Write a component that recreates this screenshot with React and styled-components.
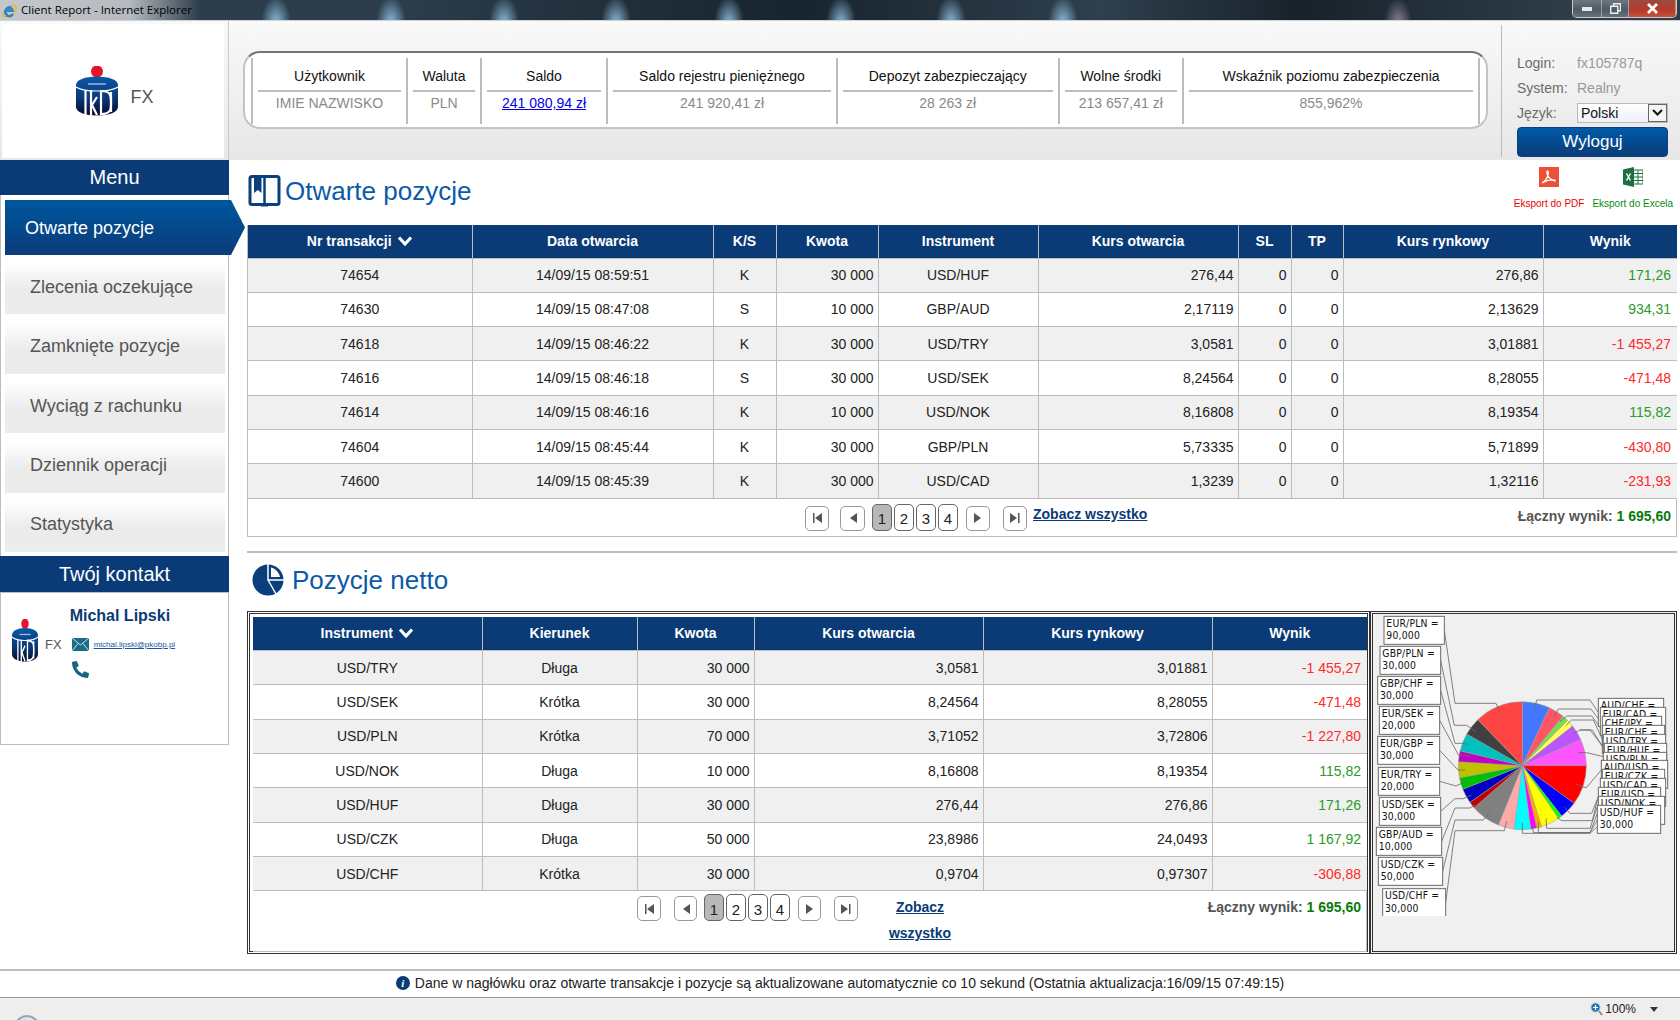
import React from "react";
import styled, { createGlobalStyle } from "styled-components";
import { FaPhoneAlt } from "react-icons/fa";

const NAVY = "#0a3b76";
const LINE = "#bdbdbd";

const GlobalStyle = createGlobalStyle`
  html, body {
    margin: 0;
    padding: 0;
    background: #fff;
  }
  body {
    width: 1680px;
    height: 1020px;
    overflow: hidden;
    font-family: "Liberation Sans", Arial, sans-serif;
    font-size: 14px;
    color: #222;
  }
  * {
    box-sizing: border-box;
  }
`;

/* ---------- window chrome ---------- */

const blobs = [276, 391, 504, 616, 729, 841, 951, 1063]
  .map((x) => `radial-gradient(15px 28px at ${x}px 24px, rgba(150,205,240,.9), rgba(150,205,240,0))`)
  .join(",");

const TitleBar = styled.div`
  height: 21px;
  display: flex;
  align-items: flex-start;
  border-bottom: 1px solid #cfd3d6;
  background:
    linear-gradient(90deg, rgba(205,208,212,.95) 0, rgba(205,208,212,.85) 130px, rgba(205,208,212,0) 200px),
    radial-gradient(14px 26px at 1398px 24px, rgba(190,170,200,.7), rgba(190,170,200,0)),
    ${blobs},
    linear-gradient(90deg, #2c3c4a 0, #2c3c4a 400px, #18242e 800px, #2f3f4d 1100px, #18222b 1300px, #2f3d49 1570px);
`;

const TitleIcon = styled.svg`
  width: 17px;
  height: 18px;
  margin: 2px 3px 0 1px;
  flex-shrink: 0;
`;

const TitleText = styled.span`
  font-family: "Open Sans", sans-serif;
  font-size: 11.5px;
  line-height: 20px;
  color: #000;
  white-space: nowrap;
`;

const WindowButtons = styled.div`
  margin-left: auto;
  margin-right: 3px;
  display: flex;
  height: 18px;
  border: 1px solid #c8ccd2;
  border-top: 0;
  border-radius: 0 0 5px 5px;
  overflow: hidden;
`;

const WindowButton = styled.div`
  width: ${(p) => p.$w}px;
  display: flex;
  align-items: center;
  justify-content: center;
  color: #fff;
  border-right: 1px solid rgba(255, 255, 255, 0.4);
  background: ${(p) =>
    p.$close
      ? "linear-gradient(#9a4a40, #b83a28 60%, #c2553f)"
      : "linear-gradient(#6d7780, #4e5a64 55%, #66717a)"};
`;

const Header = styled.header`
  height: 139px;
  display: flex;
  background: linear-gradient(#f9f9f9, #e7e7e7);
`;

const LogoCell = styled.div`
  width: 229px;
  padding: 3px 4px 2px 2px;
  border-right: 1px solid #c9c9c9;
  flex-shrink: 0;
`;

const LogoPanel = styled.div`
  height: 100%;
  padding-left: 4px;
  background: #fff;
  display: flex;
  align-items: center;
  justify-content: center;
  gap: 12px;
`;

const LogoFx = styled.span`
  margin-top: ${(p) => p.$mt}px;
  font-size: ${(p) => p.$size}px;
  color: #555;
`;

const InfoBox = styled.div`
  width: 1245px;
  height: 78px;
  margin: 30px 0 0 14px;
  padding: 5px 6px;
  display: flex;
  background: #fff;
  border: 2px solid #c4c4c4;
  border-top-color: #747474;
  border-radius: 17px;
  flex-shrink: 0;
`;

const InfoCell = styled.div`
  width: ${(p) => p.$w}px;
  height: 66px;
  padding: 0 5px;
  border-left: 2px solid ${LINE};
  border-right: ${(p) => (p.$last ? `2px solid ${LINE}` : "0")};
  text-align: center;
  flex-shrink: 0;
`;

const InfoTitle = styled.div`
  height: 34px;
  padding-top: 9px;
  line-height: 18px;
  color: #111;
  border-bottom: 2px solid ${LINE};
  white-space: nowrap;
`;

const InfoValue = styled.div`
  padding-top: 2px;
  line-height: 18px;
  color: #8a8a8a;
`;

const BlueLink = styled.a`
  color: #0000ee;
  text-decoration: underline;
`;

const LoginPanel = styled.div`
  width: 167px;
  margin: 4px 0 3px 13px;
  padding: 25px 0 0 15px;
  border-left: 1px solid #bbb;
  flex-shrink: 0;
`;

const LoginRow = styled.div`
  height: 25px;
  display: flex;
  align-items: center;
`;

const LoginLabel = styled.span`
  width: 60px;
  color: #6b6b6b;
`;

const LoginValue = styled.span`
  color: #999;
`;

const SelectBox = styled.div`
  width: 91px;
  height: 20px;
  display: flex;
  align-items: center;
  justify-content: space-between;
  padding-left: 3px;
  color: #111;
  border: 1px solid #bbb;
  background: linear-gradient(#fff, #eef0fa);
`;

const SelectArrow = styled.span`
  width: 19px;
  height: 18px;
  display: flex;
  align-items: center;
  justify-content: center;
  border: 1px solid #666;
  background: #f4f4f4;
`;

const LogoutButton = styled.button`
  width: 151px;
  height: 30px;
  margin-top: 2px;
  padding: 0;
  display: block;
  color: #fff;
  font: 17px "Liberation Sans", Arial, sans-serif;
  border: 1px solid #0a3f80;
  border-radius: 4px;
  background: linear-gradient(#005aa8, #0a3c78);
`;

/* ---------- sidebar ---------- */

const Main = styled.div`
  height: 809px;
  display: flex;
`;

const Sidebar = styled.aside`
  width: 229px;
  flex-shrink: 0;
`;

const SideHeader = styled.div`
  height: ${(p) => p.$h}px;
  display: flex;
  align-items: center;
  justify-content: center;
  color: #fff;
  font-size: 20px;
  background: ${NAVY};
`;

const MenuList = styled.nav`
  height: 361px;
  padding: 5px 0 0 4px;
  display: flex;
  flex-direction: column;
  gap: 5.4px;
  border-left: 1px solid ${LINE};
  border-right: 1px solid ${LINE};
`;

const MenuItem = styled.div`
  width: 220px;
  height: 54px;
  padding-left: 25px;
  display: flex;
  align-items: center;
  flex-shrink: 0;
  font-size: 18px;
  color: #555;
  background: linear-gradient(#fff 5%, #ebebeb 55%, #ececec);
`;

const ActiveItem = styled(MenuItem)`
  position: relative;
  z-index: 2;
  width: 240px;
  height: 55px;
  padding: 2px 0 0 20px;
  color: #fff;
  background: linear-gradient(#00569f, #0a3c78);
  clip-path: polygon(0 0, 226px 0, 240px 50%, 226px 100%, 0 100%);
`;

const ContactBox = styled.div`
  height: 153px;
  padding: 14px 0 0 11px;
  display: flex;
  gap: 8px;
  border: 1px solid ${LINE};
`;

const ContactLogo = styled.div`
  margin-top: 12px;
  display: flex;
  align-items: center;
  gap: 7px;
  height: 43px;
`;

const ContactName = styled.div`
  font-size: 16px;
  font-weight: bold;
  line-height: 18px;
  color: ${NAVY};
`;

const ContactRow = styled.div`
  margin: ${(p) => p.$mt}px 0 0 2px;
  display: flex;
  align-items: center;
  gap: 5px;
  color: #156682;
`;

const Mail = styled.a`
  font-size: 8px;
  color: #1a56a0;
  text-decoration: underline;
`;

/* ---------- content ---------- */

const Content = styled.main`
  width: 1430px;
  margin-left: 18px;
`;

const TitleRow = styled.div`
  height: ${(p) => p.$h}px;
  padding: ${(p) => p.$top}px 0 0 ${(p) => p.$left}px;
  display: flex;
  align-items: flex-start;
  gap: ${(p) => p.$gap}px;
`;

const PageTitle = styled.h1`
  margin: 1px 0 0;
  font-size: 26px;
  font-weight: normal;
  line-height: 30px;
  color: #0b5aa8;
`;

const Exports = styled.div`
  margin-left: auto;
  margin-top: -8px;
  padding-right: 4px;
  display: flex;
  gap: 8px;
`;

const ExportLink = styled.a`
  display: flex;
  flex-direction: column;
  align-items: center;
  gap: 11px;
  font-size: 10px;
  line-height: 12px;
  white-space: nowrap;
  color: ${(p) => p.$color};
`;

const Panel = styled.section`
  border: 1px solid ${LINE};
  border-top: 0;
`;

const Table = styled.table`
  width: 100%;
  table-layout: fixed;
  border-collapse: collapse;
`;

const Th = styled.th`
  height: ${(p) => p.$h}px;
  padding: 0;
  color: #fff;
  font-size: 14px;
  font-weight: bold;
  background: ${NAVY};
  border-left: 1px solid ${LINE};
  border-bottom: 1px solid ${LINE};
  &:first-child {
    border-left: 0;
  }
`;

const Row = styled.tr`
  background: ${(p) => (p.$odd ? "#f0f0f0" : "#fff")};
`;

const Td = styled.td`
  height: 34.3px;
  padding: 0 4px;
  font-size: 14px;
  color: ${(p) => p.$color || "#222"};
  text-align: ${(p) => p.$align || "center"};
  border: 1px solid ${LINE};
  &:first-child {
    border-left: 0;
  }
  &:last-child {
    padding-right: 6px;
    border-right: 0;
  }
`;

const SortMark = styled.svg`
  width: 16px;
  height: 12px;
  margin-left: 5px;
  vertical-align: -1px;
`;

const Footer = styled.div`
  height: ${(p) => p.$h}px;
  padding: ${(p) => p.$top}px 5px 0 ${(p) => p.$inset}px;
  display: flex;
  align-items: flex-start;
`;

const PagerButton = styled.span`
  width: ${(p) => p.$w}px;
  height: ${(p) => (p.$tall ? 27 : 25)}px;
  margin-top: ${(p) => (p.$tall ? 0 : 2)}px;
  margin-left: ${(p) => p.$ml}px;
  display: flex;
  align-items: center;
  justify-content: center;
  flex-shrink: 0;
  padding-top: ${(p) => (p.$tall ? 3 : 0)}px;
  color: #222;
  font-size: 15px;
  background: ${(p) => (p.$active ? "#b8b8b8" : "#fff")};
  border: 1px solid ${(p) => (p.$tall ? "#666" : "#999")};
  border-radius: 5px;
`;

const ArrowIcon = styled.svg`
  width: 12px;
  height: 12px;
  fill: #555;
`;

const AllLink = styled.a`
  display: block;
  color: ${NAVY};
  font-size: 14px;
  font-weight: bold;
  line-height: ${(p) => p.$lh}px;
  text-decoration: underline;
  text-align: center;
  white-space: nowrap;
  width: ${(p) => p.$w}px;
  margin-left: ${(p) => p.$ml}px;
  flex-shrink: 0;
`;

const Total = styled.div`
  margin-left: auto;
  font-size: 14px;
  font-weight: bold;
  line-height: ${(p) => p.$lh}px;
  color: #555;
  white-space: nowrap;
`;

const TotalValue = styled.span`
  color: #0a7a0a;
`;

const Divider = styled.hr`
  height: 2px;
  margin: 14px 0 0;
  border: 0;
  background: ${LINE};
`;

const NetRow = styled.div`
  height: 343px;
  display: flex;
`;

const DoubleBox = styled.div`
  height: 100%;
  border: 3px double #333;
`;

const NetBox = styled(DoubleBox)`
  width: 1123px;
  padding-left: 3px;
  padding-top: 3px;
`;

const NetInner = styled.div`
  height: 335px;
  border-bottom: 1px solid ${LINE};
  border-right: 1px solid ${LINE};
`;

const ChartBox = styled(DoubleBox)`
  width: 307px;
  background: #f0f0f0;
`;

const Chart = styled.svg`
  display: block;
  width: 301px;
  height: 302px;
  text {
    font-family: "DejaVu Sans", sans-serif;
    font-stretch: condensed;
    font-size: 31px;
    letter-spacing: 0.6px;
    fill: #111;
  }
`;

/* ---------- bottom ---------- */

const Note = styled.div`
  height: 29px;
  padding-bottom: 3px;
  display: flex;
  align-items: center;
  justify-content: center;
  gap: 5px;
  border-top: 2px solid ${LINE};
  border-bottom: 1px solid #999;
  color: #222;
`;

const NoteIcon = styled.span`
  width: 14px;
  height: 14px;
  border-radius: 50%;
  background: ${NAVY};
  color: #fff;
  font: italic bold 11px/14px "Liberation Serif", serif;
  text-align: center;
`;

const StatusBar = styled.div`
  height: 22px;
  display: flex;
  align-items: flex-start;
  overflow: hidden;
  background: #f0eded;
`;

const Orb = styled.div`
  width: 26px;
  height: 26px;
  margin: 17px 0 0 14px;
  border: 2px solid #8ea6bd;
  border-radius: 50%;
  background: #dfe8f0;
  flex-shrink: 0;
`;

const Zoom = styled.div`
  margin-left: auto;
  padding: 4px 22px 0 0;
  display: flex;
  align-items: center;
  gap: 2px;
  font-size: 12px;
  line-height: 14px;
  color: #222;
`;

const ZoomCaret = styled.span`
  width: 0;
  height: 0;
  margin-left: 12px;
  border-left: 4px solid transparent;
  border-right: 4px solid transparent;
  border-top: 5px solid #333;
`;

/* ---------- drawings ---------- */

const Logo = ({ w, h }) => (
  <svg width={w} height={h} viewBox="0 0 42 50" preserveAspectRatio="none">
    <defs>
      <linearGradient id="pko" x1="0" y1="0" x2="0" y2="1">
        <stop offset="0" stopColor="#0a57a5" />
        <stop offset="0.55" stopColor="#0a3a7a" />
        <stop offset="1" stopColor="#040a24" />
      </linearGradient>
    </defs>
    <circle cx="21" cy="5.5" r="6" fill="#e8132b" />
    <path d="M0 19c0-5 9-8.500 21-8.500s21 3.500 21 8.500v22c0 5-9 8.500-21 8.500S0 46 0 41z" fill="url(#pko)" />
    <path d="M12 18h18" stroke="#9fb8dc" strokeWidth="1.500" />
    <path d="M9.500 24v26M15 24v26M21 31l-5 8 5 10M25 24v25M35 26v20" stroke="#fff" strokeWidth="2.200" fill="none" />
    <path d="M25 25c8 0 10 3 10 9v5c0 6-2 9-10 9" stroke="#fff" strokeWidth="2.200" fill="none" />
    <path d="M0 21c5 3 11 4 21 4s16-1 21-4" stroke="#fff" strokeWidth="1.200" fill="none" />
  </svg>
);

const SortDown = () => (
  <SortMark viewBox="0 0 16 12">
    <path d="M2 2.500 8 9l6-6.500" fill="none" stroke="#fff" strokeWidth="3.200" />
  </SortMark>
);

const BookIcon = () => (
  <svg width="33" height="32" viewBox="0 0 33 32">
    <path d="M2 3.500Q2 1.500 4 1.500H29Q31 1.500 31 3.500V28Q31 29.500 29 29.500H4Q2 29.500 2 28Z" fill="#fff" stroke="#0a3f7c" strokeWidth="3" />
    <path d="M16.500 1v30" stroke="#0a3f7c" strokeWidth="2.500" />
    <path d="M6 1h7.500v17l-3.700-3-3.800 3z" fill="#0a3f7c" />
    <path d="M13 32h7" stroke="#0a3f7c" strokeWidth="1" />
  </svg>
);

const PieIcon = () => (
  <svg width="32" height="32" viewBox="0 0 32 32">
    <circle cx="16" cy="16" r="15.500" fill="#0a3f7c" />
    <path d="M16 0v16h16M16 16l8 14" fill="none" stroke="#fff" strokeWidth="1.500" />
    <path d="M19 3.500c4.500 1 8 5 9 9.500h-9z" fill="#fff" />
  </svg>
);

const PdfIcon = () => (
  <svg width="20" height="20" viewBox="0 0 20 20">
    <rect width="20" height="20" fill="#ee4f37" />
    <path d="M3 16c2-1 5-4 6-8 .5-2 .3-4-.5-4s-1 2 0 4c1.500 3 4 5 7 6 1 .3 1-1-.5-1-3-.2-7 .5-10 2-1 .5-2 1-2 1z" fill="none" stroke="#fff" strokeWidth="1.300" />
  </svg>
);

const ExcelIcon = () => (
  <svg width="20" height="20" viewBox="0 0 20 20">
    <path d="M0 2.500 11 0v20L0 17.500z" fill="#1d7044" />
    <path d="M11 3h9v14h-9" fill="#fff" stroke="#1d7044" />
    <path d="M11 6.500h9M11 10h9M11 13.500h9M15 3v14" stroke="#1d7044" />
    <path d="M3.500 6.500l4 7M7.500 6.500l-4 7" stroke="#fff" strokeWidth="1.400" />
  </svg>
);

const MailIcon = () => (
  <svg width="17" height="13" viewBox="0 0 17 13">
    <rect width="17" height="13" fill="#1a6a8a" />
    <path d="M0 0l8.500 7L17 0M0 13l6-7.500M17 13l-6-7.500" fill="none" stroke="#fff" strokeWidth=".8" />
  </svg>
);

const EdgeArrow = ({ d }) => (
  <ArrowIcon viewBox="0 0 12 12">
    <path d={d} />
  </ArrowIcon>
);

const Pager = ({ small }) => (
  <>
    <PagerButton $w={24}>
      <EdgeArrow d="M2 1h1.500v10H2zM11 1v10L4 6z" />
    </PagerButton>
    <PagerButton $w={small ? 23 : 25} $ml={small ? 13 : 11}>
      <EdgeArrow d="M10 1v10L3 6z" />
    </PagerButton>
    {[1, 2, 3, 4].map((n) => (
      <PagerButton key={n} $tall $w={20} $ml={n === 1 ? 7 : 2} $active={n === 1}>
        {n}
      </PagerButton>
    ))}
    <PagerButton $w={small ? 23 : 24} $ml={8}>
      <EdgeArrow d="M2 1v10l7-5z" />
    </PagerButton>
    <PagerButton $w={24} $ml={13}>
      <EdgeArrow d="M1 1v10l7-5zM9 1h1.500v10H9z" />
    </PagerButton>
  </>
);

/* ---------- pie chart, coordinates are in a 3x grid ---------- */

const slices = [
  [25, "#4477ff"], [39.5, "#ff5566"], [45, "#77dd55"], [51.8, "#ffff55"], [66, "#bb55ff"],
  [90, "#ff55ff"], [126, "#ff0000"], [142, "#0000ff"], [145.6, "#00ff00"], [162.5, "#ffff00"],
  [167, "#ffaa00"], [172.5, "#ff00ff"], [187.5, "#00ffff"], [202, "#ffaaaa"], [229, "#808080"],
  [235, "#c00000"], [248.4, "#0000c0"], [259, "#00c000"], [273.6, "#c0c000"], [283.4, "#c000c0"],
  [299.7, "#00c0c0"], [316, "#404040"], [360, "#ff4444"],
];

const CX = 487;
const CY = 497;
const R = 192;

const point = (deg) => {
  const a = (deg * Math.PI) / 180;
  return `${(CX + R * Math.sin(a)).toFixed(1)} ${(CY - R * Math.cos(a)).toFixed(1)}`;
};

const sliceEdges = slices.map((s, i) => [i ? slices[i - 1][0] : 0, s[0], s[1]]);

const leftLabels = [
  ["EUR/PLN", "90,000", 72, 49, 253],
  ["GBP/PLN", "30,000", 60, 139, 242],
  ["GBP/CHF", "30,000", 53, 229, 242],
  ["EUR/SEK", "20,000", 58, 319, 239],
  ["EUR/GBP", "30,000", 53, 409, 239],
  ["EUR/TRY", "20,000", 55, 502, 239],
  ["USD/SEK", "30,000", 58, 592, 242],
  ["GBP/AUD", "10,000", 49, 682, 245],
  ["USD/CZK", "50,000", 55, 772, 248],
  ["USD/CHF", "30,000", 68, 866, 257],
];

const rightLabels = [
  ["AUD/CHF", "30,000", 715, 295, 911],
  ["EUR/CAD", "20,000", 721, 322, 917],
  ["CHF/JPY", "10,000", 727, 349, 905],
  ["EUR/CHF", "10,000", 727, 376, 914],
  ["USD/TRY", "30,000", 730, 403, 917],
  ["EUR/HUF", "30,000", 733, 430, 920],
  ["USD/PLN", "70,000", 730, 457, 920],
  ["AUD/USD", "70,000", 724, 481, 923],
  ["EUR/CZK", "30,000", 727, 508, 914],
  ["USD/CAD", "30,000", 721, 535, 917],
  ["EUR/USD", "10,000", 715, 562, 902],
  ["USD/NOK", "10,000", 715, 589, 914],
  ["USD/HUF", "30,000", 712, 616, 902],
];

const leaders = [
  "253,91 285,310 408,310 420,337",
  "242,181 283,376 320,376 348,395",
  "242,271 285,430 305,430 326,433",
  "239,361 296,466 315,466 333,470",
  "239,451 294,510 315,510",
  "239,544 288,558 300,552 320,548",
  "242,634 285,596 310,596 335,585",
  "245,724 285,624 330,624 345,615",
  "248,814 285,660 370,660 388,638",
  "257,908 285,692 433,692 440,663",
  "715,337 690,300 530,300 523,330",
  "721,364 693,327 595,327 580,352",
  "727,391 695,348 620,348 600,365",
  "727,418 700,360 635,360 617,377",
  "730,445 697,390 660,390 640,400",
  "733,445 690,390 660,390",
  "730,470 680,458 655,458",
  "724,510 680,562 672,562 648,552",
  "715,590 695,640 630,640 612,620",
  "712,600 697,662 605,662 590,652",
  "712,620 690,685 560,685 558,655",
  "712,640 690,698 535,698 535,665",
  "712,660 690,698 520,698 517,670",
  "712,680 690,700 487,700 487,668",
];

const PieChart = () => (
  <Chart viewBox="39 42 903 906">
    {sliceEdges.map(([from, to, color]) => (
      <path
        key={from}
        d={`M${CX} ${CY}L${point(from)}A${R} ${R} 0 ${to - from > 180 ? 1 : 0} 1 ${point(to)}Z`}
        fill={color}
        stroke="#9a9a9a"
        strokeWidth="1.500"
      />
    ))}
    {leaders.map((pts) => (
      <polyline key={pts} points={pts} fill="none" stroke="#6a6a6a" strokeWidth="2.500" />
    ))}
    {[...leftLabels, ...rightLabels].map(([pair, amount, x, y, x2]) => (
      <g key={pair}>
        <rect x={x} y={y} width={x2 - x} height={84} fill="#fff" stroke="#6a6a6a" strokeWidth="3" />
        <text x={x + 7} y={y + 31}>{pair} =</text>
        <text x={x + 7} y={y + 69}>{amount}</text>
      </g>
    ))}
  </Chart>
);

/* ---------- data ---------- */

const GREEN = "#2a9a2a";
const RED = "#ff2a2a";

const openColumns = [224, 241, 63, 102, 160, 200, 53, 52, 200, 134];
const openRows = [
  ["74654", "14/09/15 08:59:51", "K", "30 000", "USD/HUF", "276,44", "276,86", "171,26", GREEN],
  ["74630", "14/09/15 08:47:08", "S", "10 000", "GBP/AUD", "2,17119", "2,13629", "934,31", GREEN],
  ["74618", "14/09/15 08:46:22", "K", "30 000", "USD/TRY", "3,0581", "3,01881", "-1 455,27", RED],
  ["74616", "14/09/15 08:46:18", "S", "30 000", "USD/SEK", "8,24564", "8,28055", "-471,48", RED],
  ["74614", "14/09/15 08:46:16", "K", "10 000", "USD/NOK", "8,16808", "8,19354", "115,82", GREEN],
  ["74604", "14/09/15 08:45:44", "K", "30 000", "GBP/PLN", "5,73335", "5,71899", "-430,80", RED],
  ["74600", "14/09/15 08:45:39", "K", "30 000", "USD/CAD", "1,3239", "1,32116", "-231,93", RED],
];

const netColumns = [229, 155, 117, 229, 229, 155];
const netRows = [
  ["USD/TRY", "Długa", "30 000", "3,0581", "3,01881", "-1 455,27", RED],
  ["USD/SEK", "Krótka", "30 000", "8,24564", "8,28055", "-471,48", RED],
  ["USD/PLN", "Krótka", "70 000", "3,71052", "3,72806", "-1 227,80", RED],
  ["USD/NOK", "Długa", "10 000", "8,16808", "8,19354", "115,82", GREEN],
  ["USD/HUF", "Długa", "30 000", "276,44", "276,86", "171,26", GREEN],
  ["USD/CZK", "Długa", "50 000", "23,8986", "24,0493", "1 167,92", GREEN],
  ["USD/CHF", "Krótka", "30 000", "0,9704", "0,97307", "-306,88", RED],
];

const infoCells = [
  ["Użytkownik", "IMIE NAZWISKO", 155],
  ["Waluta", "PLN", 74],
  ["Saldo", <BlueLink key="s">241 080,94 zł</BlueLink>, 126],
  ["Saldo rejestru pieniężnego", "241 920,41 zł", 230],
  ["Depozyt zabezpieczający", "28 263 zł", 221.5],
  ["Wolne środki", "213 657,41 zł", 124.5],
  ["Wskaźnik poziomu zabezpieczenia", "855,962%", 298],
];

const menu = ["Zlecenia oczekujące", "Zamknięte pozycje", "Wyciąg z rachunku", "Dziennik operacji", "Statystyka"];

const App = () => {
  return (
    <>
      <GlobalStyle />
      <TitleBar>
        <TitleIcon viewBox="0 0 17 18">
          <ellipse cx="8.500" cy="9" rx="8" ry="4" fill="none" stroke="#e8b32a" strokeWidth="1.300" transform="rotate(-35 8.500 9)" />
          <path d="M4 9.500h8.500c0-3-2-5-4.300-5S3.500 7 3.500 10s2.500 5 5 5c2 0 3.500-1 4-2.500h-2.500c-.5.700-1 1-1.700 1-1.300 0-2.300-1-2.300-2.500z" fill="#2a8fd8" stroke="#1464a8" strokeWidth=".6" />
        </TitleIcon>
        <TitleText>Client Report - Internet Explorer</TitleText>
        <WindowButtons>
          <WindowButton $w={29}>
            <svg width="10" height="4"><rect width="10" height="4" fill="#e8e8e8" /></svg>
          </WindowButton>
          <WindowButton $w={27}>
            <svg width="11" height="11" viewBox="0 0 11 11"><path d="M3.500 3V.7h7v7H8M.7 3.200h7v7h-7z" fill="none" stroke="#eee" strokeWidth="1.400" /></svg>
          </WindowButton>
          <WindowButton $w={47} $close>
            <svg width="13" height="11" viewBox="0 0 13 11"><path d="M2 1l9 9M11 1l-9 9" stroke="#fff" strokeWidth="2.800" /></svg>
          </WindowButton>
        </WindowButtons>
      </TitleBar>

      <Header>
        <LogoCell>
          <LogoPanel>
            <Logo w={42} h={50} />
            <LogoFx $size={18} $mt={12}>FX</LogoFx>
          </LogoPanel>
        </LogoCell>
        <InfoBox>
          {infoCells.map(([title, value, w], i) => (
            <InfoCell key={title} $w={w} $last={i === infoCells.length - 1}>
              <InfoTitle>{title}</InfoTitle>
              <InfoValue>{value}</InfoValue>
            </InfoCell>
          ))}
        </InfoBox>
        <LoginPanel>
          <LoginRow>
            <LoginLabel>Login:</LoginLabel>
            <LoginValue>fx105787q</LoginValue>
          </LoginRow>
          <LoginRow>
            <LoginLabel>System:</LoginLabel>
            <LoginValue>Realny</LoginValue>
          </LoginRow>
          <LoginRow>
            <LoginLabel>Język:</LoginLabel>
            <SelectBox>
              Polski
              <SelectArrow>
                <svg width="11" height="7" viewBox="0 0 11 7"><path d="M1 1l4.500 4.500L10 1" fill="none" stroke="#111" strokeWidth="2" /></svg>
              </SelectArrow>
            </SelectBox>
          </LoginRow>
          <LogoutButton>Wyloguj</LogoutButton>
        </LoginPanel>
      </Header>

      <Main>
        <Sidebar>
          <SideHeader $h={35}>Menu</SideHeader>
          <MenuList>
            <ActiveItem>Otwarte pozycje</ActiveItem>
            {menu.map((item) => (
              <MenuItem key={item}>{item}</MenuItem>
            ))}
          </MenuList>
          <SideHeader $h={36}>Twój kontakt</SideHeader>
          <ContactBox>
            <ContactLogo>
              <Logo w={26} h={43} />
              <LogoFx $size={13} $mt={8}>FX</LogoFx>
            </ContactLogo>
            <div>
              <ContactName>Michal Lipski</ContactName>
              <ContactRow $mt={13}>
                <MailIcon />
                <Mail>michal.lipski@pkobp.pl</Mail>
              </ContactRow>
              <ContactRow $mt={10}>
                <FaPhoneAlt size={17} />
              </ContactRow>
            </div>
          </ContactBox>
        </Sidebar>

        <Content>
          <TitleRow $h={65} $top={15} $left={1} $gap={4}>
            <BookIcon />
            <PageTitle>Otwarte pozycje</PageTitle>
            <Exports>
              <ExportLink $color="#f00000">
                <PdfIcon />
                Eksport do PDF
              </ExportLink>
              <ExportLink $color="#0a8a0a">
                <ExcelIcon />
                Eksport do Excela
              </ExportLink>
            </Exports>
          </TitleRow>

          <Panel>
            <Table>
              <colgroup>
                {openColumns.map((w, i) => (
                  <col key={i} width={w} />
                ))}
              </colgroup>
              <thead>
                <tr>
                  <Th $h={33}>Nr transakcji<SortDown /></Th>
                  {["Data otwarcia", "K/S", "Kwota", "Instrument", "Kurs otwarcia", "SL", "TP", "Kurs rynkowy", "Wynik"].map((h) => (
                    <Th key={h} $h={33}>{h}</Th>
                  ))}
                </tr>
              </thead>
              <tbody>
                {openRows.map((r, i) => (
                  <Row key={r[0]} $odd={i % 2 === 0}>
                    <Td>{r[0]}</Td>
                    <Td>{r[1]}</Td>
                    <Td>{r[2]}</Td>
                    <Td $align="right">{r[3]}</Td>
                    <Td>{r[4]}</Td>
                    <Td $align="right">{r[5]}</Td>
                    <Td $align="right">0</Td>
                    <Td $align="right">0</Td>
                    <Td $align="right">{r[6]}</Td>
                    <Td $align="right" $color={r[8]}>{r[7]}</Td>
                  </Row>
                ))}
              </tbody>
            </Table>
            <Footer $h={37} $inset={557} $top={5}>
              <Pager />
              <AllLink $lh={20} $w={114} $ml={6}>Zobacz wszystko</AllLink>
              <Total $lh={24}>Łączny wynik: <TotalValue>1 695,60</TotalValue></Total>
            </Footer>
          </Panel>

          <Divider />

          <TitleRow $h={58} $top={11} $left={5} $gap={8}>
            <PieIcon />
            <PageTitle>Pozycje netto</PageTitle>
          </TitleRow>

          <NetRow>
            <NetBox>
              <NetInner>
                <Table>
                  <colgroup>
                    {netColumns.map((w, i) => (
                      <col key={i} width={w} />
                    ))}
                  </colgroup>
                  <thead>
                    <tr>
                      <Th $h={34}>Instrument<SortDown /></Th>
                      {["Kierunek", "Kwota", "Kurs otwarcia", "Kurs rynkowy", "Wynik"].map((h) => (
                        <Th key={h} $h={34}>{h}</Th>
                      ))}
                    </tr>
                  </thead>
                  <tbody>
                    {netRows.map((r, i) => (
                      <Row key={r[0]} $odd={i % 2 === 0}>
                        <Td>{r[0]}</Td>
                        <Td>{r[1]}</Td>
                        <Td $align="right">{r[2]}</Td>
                        <Td $align="right">{r[3]}</Td>
                        <Td $align="right">{r[4]}</Td>
                        <Td $align="right" $color={r[6]}>{r[5]}</Td>
                      </Row>
                    ))}
                  </tbody>
                </Table>
                <Footer $h={58} $inset={384} $top={3}>
                  <Pager small />
                  <AllLink $lh={26} $w={90} $ml={17}>Zobacz<br />wszystko</AllLink>
                  <Total $lh={26}>Łączny wynik: <TotalValue>1 695,60</TotalValue></Total>
                </Footer>
              </NetInner>
            </NetBox>
            <ChartBox>
              <PieChart />
            </ChartBox>
          </NetRow>
        </Content>
      </Main>

      <Note>
        <NoteIcon>i</NoteIcon>
        Dane w nagłówku oraz otwarte transakcje i pozycje są aktualizowane automatycznie co 10 sekund (Ostatnia aktualizacja:16/09/15 07:49:15)
      </Note>
      <StatusBar>
        <Orb />
        <Zoom>
          <svg width="13" height="14" viewBox="0 0 13 14">
            <circle cx="5.500" cy="5.500" r="4.500" fill="#2a6fc0" stroke="#9cb" />
            <path d="M3 5.500h5M5.500 3v5" stroke="#fff" strokeWidth="1.200" />
            <path d="M9 9l3 4" stroke="#a86" strokeWidth="2" />
          </svg>
          100%
          <ZoomCaret />
        </Zoom>
      </StatusBar>
    </>
  );
};

export default App;
